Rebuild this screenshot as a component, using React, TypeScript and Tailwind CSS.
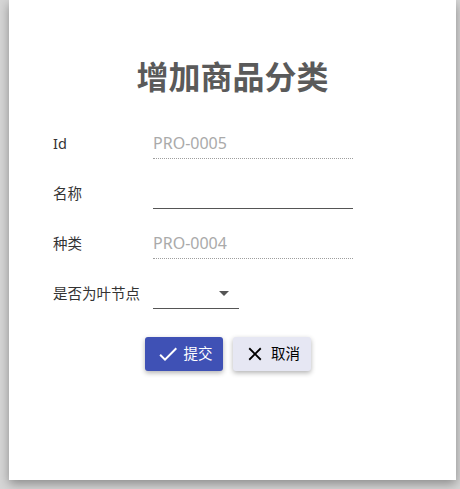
import React from "react";

const font = { fontFamily: '"Noto Sans", "Noto Sans CJK SC", sans-serif' };

function Row({ label, children }: { label: string; children: React.ReactNode }) {
  return (
    <div className="flex items-end h-[50px]">
      <div className="w-[100px] pl-[44px] box-content text-[14.5px] leading-[20px] text-[#333] pb-[6px] whitespace-nowrap">{label}</div>
      {children}
    </div>
  );
}

export default function App() {
  return (
    <div className="w-[460px] h-[489px] bg-[#d6d6d6] overflow-hidden" style={font}>
      <div className="ml-[9px] w-[447px] h-[480px] bg-white shadow-[0_4px_10px_rgba(0,0,0,0.35)] flex flex-col">
        <h1 className="mt-[53px] text-center text-[32px] leading-[44px] font-bold text-[#5a5a5a]" style={{ fontFamily: '"Noto Sans CJK SC", sans-serif' }}>
          增加商品分类
        </h1>
        <div className="mt-[12px] flex flex-col">
          <Row label="Id">
            <div className="w-[200px] border-b border-dotted border-[#9e9e9e] pb-[5px] text-[16px] leading-[20px] text-[#aaa]">PRO-0005</div>
          </Row>
          <Row label="名称">
            <div className="w-[200px] border-b border-[#555] h-[20px]"></div>
          </Row>
          <Row label="种类">
            <div className="w-[200px] border-b border-dotted border-[#9e9e9e] pb-[5px] text-[16px] leading-[20px] text-[#aaa]">PRO-0004</div>
          </Row>
          <Row label="是否为叶节点">
            <div className="w-[86px] border-b border-[#555] h-[26px] flex items-start justify-end pr-[10px] pt-[8px]">
              <svg width="10" height="5" viewBox="0 0 10 5"><path d="M0 0 L10 0 L5 5 Z" fill="#555" /></svg>
            </div>
          </Row>
        </div>
        <div className="mt-[28px] flex justify-center gap-[10px] pr-[9px]">
          <button className="w-[78px] h-[34px] rounded-[3px] bg-[#3f51b5] text-white flex items-center justify-center gap-[4px] text-[14.5px] shadow-[0_2px_5px_rgba(0,0,0,0.3)]">
            <svg width="24" height="24" viewBox="0 0 24 24"><path d="M9 16.17 4.83 12l-1.42 1.41L9 19 21 7l-1.41-1.41z" fill="white" /></svg>
            <span>提交</span>
          </button>
          <button className="w-[78px] h-[34px] rounded-[3px] bg-[#e6e7f3] text-black flex items-center justify-center gap-[5px] text-[14.5px] shadow-[0_2px_5px_rgba(0,0,0,0.3)]">
            <svg width="22" height="22" viewBox="0 0 24 24"><path d="M19 6.41 17.59 5 12 10.59 6.41 5 5 6.41 10.59 12 5 17.59 6.41 19 12 13.41 17.59 19 19 17.59 13.41 12z" fill="black" /></svg>
            <span>取消</span>
          </button>
        </div>
      </div>
    </div>
  );
}
